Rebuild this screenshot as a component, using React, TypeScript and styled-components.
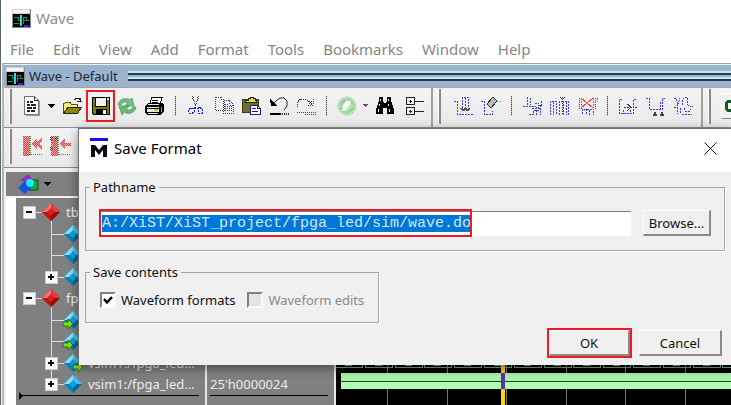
import React, { useEffect, useRef } from "react";
import styled, { createGlobalStyle, css } from "styled-components";

const uiFont = `"Noto Sans", "Open Sans", sans-serif`;

const GlobalStyle = createGlobalStyle`
  * { box-sizing: border-box; }
  html, body { margin: 0; overflow: hidden; }
  body { font-family: ${uiFont}; font-size: 13px; background: #fff; }
  button, input { font-family: inherit; font-size: inherit; }
`;

/* ---------- layout ---------- */

const AppWindow = styled.main`
  position: relative;
  display: flex;
  flex-direction: column;
  height: 100vh;
  border-left: 1px solid #566565;
  background: #fff;
  overflow: hidden;
`;

const TitleBar = styled.header`
  display: flex;
  align-items: center;
  gap: 5px;
  height: 38px;
  padding: 0 0 2px 11px;
  color: #8c8c8c;
  font-size: 15px;
`;

const MenuBar = styled.nav`
  display: flex;
  align-items: center;
  gap: 19px;
  height: 25px;
  padding: 0 0 3px 9px;
`;

const MenuItem = styled.button`
  flex: none;
  padding: 0;
  border: 0;
  background: none;
  color: #858585;
  font-size: 15px;
  line-height: 22px;
`;

const Pane = styled.section`
  flex: 1;
  min-height: 0;
  display: flex;
  flex-direction: column;
  margin-left: 1px;
  border-top: 1px solid #a0a0a0;
  border-left: 2px solid #b4b4b4;
  background: #f0f0f0;
`;

const PaneHeader = styled.div`
  display: flex;
  align-items: center;
  gap: 4px;
  height: 23px;
  margin-top: 1px;
  padding-left: 2px;
  border-bottom: 1px solid #a8a49c;
  background: #99b4d1;
  color: #22262c;
`;

const PaneTitle = styled.h1`
  margin: 0 6px 0 0;
  font-size: 13px;
  font-weight: 400;
  line-height: 18px;
`;

const Grip = styled.span`
  flex: 1;
  height: 10px;
  background: linear-gradient(#bdeaf5 0 2px, #2b3742 2px 4px, #99b4d1 4px 6px, #bdeaf5 6px 8px, #2b3742 8px);
`;

const ToolRow = styled.div`
  display: flex;
  height: 40px;
  background: linear-gradient(#f4f4f4, #e9e9e9);
  border-bottom: 1px solid #8c8c8c;
`;

const ToolGroup = styled.div<{ $grow?: boolean }>`
  display: flex;
  flex: ${(p) => (p.$grow ? "1 0 auto" : "none")};
  align-items: center;
  padding: 0 2px 3px 5px;
  border-right: 2px solid #a0a0a0;
`;

const Handle = styled.span`
  width: 3px;
  height: 35px;
  margin-right: 10px;
  border-left: 1px solid #fff;
  border-right: 2px solid #8a8a8a;
`;

const ToolButton = styled.button<{ $w: number; $marked?: boolean }>`
  flex: none;
  display: flex;
  align-items: center;
  justify-content: center;
  width: ${(p) => p.$w}px;
  height: 32px;
  padding: 0;
  border: 0;
  background: none;
  ${(p) =>
    p.$marked &&
    css`
      margin: 0 2px;
      border: 2px solid #ed1c24;
    `}
`;

const Divider = styled.span<{ $w: number }>`
  flex: none;
  width: ${(p) => p.$w}px;
  height: 20px;
  background: repeating-linear-gradient(#444 0 1px, #bbb 1px 2px) center / 1px 100% no-repeat;
`;

const RaisedTool = styled.button`
  display: flex;
  align-items: center;
  width: 28px;
  height: 26px;
  padding: 0 3px;
  border: 1px solid;
  border-color: #fff #888 #888 #fff;
  background: #f0f0f0;
`;

const WaveArea = styled.div`
  flex: 1;
  min-height: 0;
  display: flex;
  flex-direction: column;
  margin: 4px 0 0 2px;
  background: #808080;
`;

const ColumnHeader = styled.div`
  display: flex;
  align-items: center;
  height: 26px;
  padding-left: 11px;
  border-bottom: 2px solid #f4f4f4;
`;

const Columns = styled.div`
  flex: 1;
  min-height: 0;
  display: grid;
  grid-template-columns: 201px 129px 1fr;
`;

const SignalColumn = styled.ul<{ $gutter?: boolean }>`
  margin: 0;
  padding: 3px 0 0;
  list-style: none;
  color: #ececec;
  background: #808080;
  border-left: ${(p) => (p.$gutter ? "10px solid #fff" : "0")};
  border-right: 2px solid #e8e8e8;
`;

const SignalRow = styled.li`
  display: flex;
  align-items: center;
  height: 21px;
  white-space: nowrap;
  &:nth-child(odd) {
    height: 22px;
  }
`;

const SignalName = styled.span`
  padding-left: 5px;
`;

const SignalValue = styled.span`
  padding-left: 3px;
`;

const EndLine = styled.li<{ $arrow?: boolean }>`
  display: flex;
  align-items: center;
  height: 1px;
  margin: 0 6px 0 3px;
  background: #000;
  ${(p) =>
    p.$arrow &&
    css`
      &::before {
        content: "";
        flex: none;
        border: solid transparent;
        border-width: 4px 0 4px 4px;
        border-left-color: #000;
      }
    `}
`;

/* ---------- dialog ---------- */

const DialogBox = styled.section`
  position: absolute;
  top: 128px;
  left: 77px;
  right: 0;
  border: solid #6e6e6e;
  border-width: 1px 0 0 1px;
  background: #f0f0f0;
  box-shadow: 0 3px 10px rgba(0, 0, 0, 0.45);
  color: #111;
`;

const DialogTitle = styled.header`
  display: flex;
  align-items: center;
  height: 43px;
  padding: 0 14px 5px 11px;
  background: #fff;
`;

const DialogName = styled.h2`
  flex: 1;
  margin: 0;
  padding-left: 6px;
  color: #000;
  font-size: 15px;
  font-weight: 400;
  line-height: 20px;
`;

const CloseButton = styled.button`
  display: flex;
  padding: 0;
  border: 0;
  background: none;
`;

const DialogBody = styled.form`
  display: flex;
  flex-direction: column;
  align-items: flex-start;
  padding: 6px 6px 7px;
`;

const Group = styled.fieldset<{ $fill?: boolean }>`
  width: ${(p) => (p.$fill ? "100%" : "294px")};
  min-width: 0;
  margin: 0 0 12px;
  padding: 0 13px;
  border: 1px solid #a6a6a6;
  box-shadow: 1px 1px 0 #fff;
`;

const GroupName = styled.legend`
  margin-left: -9px;
  padding: 0 3px;
  line-height: 18px;
`;

const PathRow = styled.div`
  position: relative;
  display: flex;
  align-items: center;
  gap: 12px;
  padding: 14px 0 14px 1px;
`;

const PathInput = styled.input`
  flex: 1;
  min-width: 0;
  height: 25px;
  padding: 0 2px;
  border: 0;
  border-top: 1px solid #808080;
  border-radius: 0;
  outline: none;
  background: #fff;
  caret-color: transparent;
  font-family: "Liberation Mono", monospace;
  font-size: 15px;
  line-height: 22px;
  &::selection {
    background: #0078d7;
    color: #d4e6f5;
  }
`;

const PathMark = styled.span`
  position: absolute;
  top: 13px;
  left: 0;
  width: 373px;
  height: 28px;
  border: 2px solid #ed1c24;
  pointer-events: none;
`;

const PushButton = styled.button<{ $w: number }>`
  width: ${(p) => p.$w}px;
  height: 26px;
  padding: 0;
  border: solid;
  border-color: #fafafa #8a8a8a #8a8a8a #fafafa;
  border-width: 1px 2px 2px 1px;
  background: #f0f0f0;
  color: #111;
`;

const Checks = styled.div`
  display: flex;
  align-items: center;
  gap: 12px;
  padding: 10px 0 13px 1px;
`;

const CheckLabel = styled.label<{ $off?: boolean }>`
  display: flex;
  align-items: center;
  gap: 5px;
  line-height: 18px;
  white-space: nowrap;
  color: ${(p) => (p.$off ? "#8a8a8a" : "#111")};
`;

const CheckFrame = styled.span`
  display: grid;
  width: 16px;
  height: 16px;
  > * {
    grid-area: 1 / 1;
  }
  svg {
    margin: 3px;
    pointer-events: none;
  }
`;

const Check = styled.input`
  appearance: none;
  width: 16px;
  height: 16px;
  margin: 0;
  border: 2px solid;
  border-color: #808080 #fafafa #fafafa #808080;
  background: #fff;
  &:disabled {
    background: #e3e3e3;
  }
`;

const Actions = styled.div`
  display: flex;
  align-self: stretch;
  justify-content: flex-end;
  align-items: center;
  gap: 7px;
  margin-top: -7px;
  padding-right: 3px;
`;

const ActionMark = styled.span`
  display: flex;
  border: 2px solid #ed1c24;
`;

/* ---------- icons ---------- */

type IconProps = { w?: number; h?: number; children: React.ReactNode; smooth?: boolean };

const Icon = ({ w = 20, h = 20, children, smooth }: IconProps) => (
  <svg
    width={w}
    height={h}
    viewBox={`0 0 ${w} ${h}`}
    fill="none"
    shapeRendering={smooth ? "auto" : "crispEdges"}
    aria-hidden="true"
  >
    {children}
  </svg>
);

const AppIcon = () => (
  <Icon w={19} h={19}>
    <rect width="19" height="19" fill="#8a8a8a" />
    <rect width="18" height="5" fill="#d2d2d2" />
    <rect y="1" x="1" width="16" height="3" fill="#f4f4f4" />
    <rect y="5" x="1" width="17" height="13" fill="#000" />
    <path d="M2 8.500h4v3h2M2 14.500h5M11 14.500v-6h3v3h3M11 11.500h2" stroke="#11a05c" />
    <path d="M9 6v11" stroke="#38d4e4" strokeWidth="2" />
    <path d="M12 16.500h5" stroke="#3a20d8" strokeWidth="2" />
  </Icon>
);

const DocIcon = () => (
  <Icon w={18}>
    <path d="M1.500 .5h10l4 4v14h-14z" fill="#fff" stroke="#777" />
    <path d="M11.500 .5v4h4" stroke="#333" />
    <path d="M4 5.500h2M7 5.500h3M4 8.500h3M8 8.500h5M4 11.500h5M10 11.500h3M4 14.500h3M8 14.500h4" stroke="#222" strokeWidth="2" />
    <path d="M16.500 5v14.500h-14" stroke="#999" />
  </Icon>
);

const Caret = ({ small }: { small?: boolean }) => (
  <Icon w={7} h={4}>
    <path
      d={small ? "M1 0h5v1h-1v1h-1v1h-1v-1h-1v-1h-1z" : "M0 0h7v1h-1v1h-1v1h-1v1h-1v-1h-1v-1h-1v-1h-1z"}
      fill={small ? "#555" : "#000"}
    />
  </Icon>
);

const OpenIcon = () => (
  <Icon w={21}>
    <path d="M1 7h2l1-1h4l1 2h6v3H6l-5 7z" fill="#f3ef72" stroke="#55520a" />
    <path d="M1.500 17.500L6 11h13.500l-4 6.500z" fill="#8b8500" stroke="#222" />
    <path d="M12 4V3h1V2h4v1h1v2M15 5h5M18.500 2v4" stroke="#222" />
  </Icon>
);

const SaveIcon = () => (
  <Icon w={18} h={18}>
    <path d="M0 0h18v18H1l-1-1z" fill="#000" />
    <path d="M1 1h2v9h12V3h1V1h1v16h-2v-6H4v6H2l-1-1z" fill="#817b00" />
    <rect x="4" y="1" width="10" height="8" fill="#f2f2f2" />
    <path d="M2 10h14v2H2z" fill="#817b00" />
    <rect x="11" y="13" width="3" height="4" fill="#f2f2f2" />
    <rect x="15" y="1" width="2" height="2" fill="#ddd" />
  </Icon>
);

const RefreshIcon = () => (
  <Icon smooth>
    <path d="M1 9C2 3 9 1 13 4l2-2 2 8H8l3-3C8 5 5 6 4 9z" fill="#74bf7c" stroke="#489d59" strokeWidth=".8" />
    <path d="M19 11c-1 6-8 8-12 5l-2 3-3-9h10l-3 3c3 2 6 1 7-2z" fill="#6bb976" stroke="#489d59" strokeWidth=".8" />
  </Icon>
);

const PrintIcon = () => (
  <Icon w={21}>
    <path d="M5.500 8L8 1.500h10L16 8z" fill="#fff" stroke="#000" />
    <path d="M8 4.500h6M8 6.500h6" stroke="#000" />
    <path d="M1 10l4-3h13l2 2v6l-4 4H3l-2-3z" fill="#000" />
    <path d="M4 8h11v1H4zM3 11h12v1H3zM3 13h12v3H3zM4 17h10v1H4z" fill="#e8e8e8" />
    <path d="M10 13h4v2h-4z" fill="#d5c900" />
    <path d="M17 11v5" stroke="#999" />
  </Icon>
);

const dash = { strokeDasharray: "1 1" };
const wide = { strokeDasharray: "2 1" };

const CutIcon = () => (
  <Icon w={16}>
    <path d="M4.500 0v3l2 3v3M10.500 0v3l-2 3v3M5.500 1v3M9.500 1v3" stroke="#444" {...dash} />
    <path d="M7.500 8v4h-5l-2 2v3h4l2-2v-4M9.500 11h3l2 3v3h-4v-4M3 12.500h4M9 12.500h4" stroke="#2020ff" {...wide} />
  </Icon>
);

const CopyIcon = () => (
  <Icon w={21}>
    <path d="M.5 1.500h6l3 3v10h-9zM6.500 1v4" stroke="#444" {...dash} />
    <path
      d="M8.500 4.500h6l4 4v9h-10zM14.500 5v4h4M10.500 8v8M12.500 8v8M14.500 10v6M16.500 10v6"
      stroke="#2b2ba8"
      {...dash}
    />
  </Icon>
);

const PasteIcon = () => (
  <Icon w={21}>
    <path d="M1.500 3.500h16v13h-16z" fill="#716d36" stroke="#3c3a10" />
    <path d="M5 4h2V2h2V1h3v1h2v2h1v2H4V4z" fill="#e5dc30" stroke="#222" />
    <path d="M9.500 9.500h7l3 3v6h-10z" fill="#fff" stroke="#1a1a98" />
    <path d="M11 12.500h4M11 15.500h6M16.500 9v3.500h3" stroke="#1a1a98" />
  </Icon>
);

const UndoIcon = () => (
  <Icon w={21}>
    <path d="M1 3l1 7h7l-3-2z" fill="#000" />
    <path d="M5 7l3-3 3-2h4l3 3v5l-3 4" stroke="#222" shapeRendering="auto" />
    <path d="M1 17.500h11" stroke="#000" strokeWidth="2" />
    <path d="M13 17.500h7" stroke="#333" strokeWidth="2" {...dash} />
  </Icon>
);

const RedoIcon = () => (
  <Icon w={21}>
    <path d="M1.500 11V6l3-3h5l4 3 3 3M12 9.500h6M17.500 3v6M15.500 5v4M13.500 7v2" stroke="#333" {...dash} />
    <path d="M1 16.500h19M9 18.500h11" stroke="#444" {...dash} />
  </Icon>
);

const AddIcon = () => (
  <Icon smooth>
    <circle cx="10" cy="10" r="9" fill="#b9dfb4" stroke="#8ec68c" strokeDasharray="1 1" />
    <circle cx="10" cy="10" r="7" fill="#93cc8f" />
    <path d="M10 3l7 7-7 7-7-7z" fill="#b4deaf" />
    <path d="M9 5h5l-1 4-5 6H5l1-5z" fill="#f4fbf2" />
  </Icon>
);

const FindIcon = () => (
  <Icon>
    <path d="M4 1h4v4l1 2h2l1-2V1h4v4l3 8v5h-7v-6H8v6H1v-5l3-8z" fill="#000" />
    <path d="M5 3h1v2H5zM13 3h1v2h-1zM4 8h1v2H4zM3 13h1v3H3zM13 8h1v2h-1zM14 13h1v3h-1z" fill="#eee" />
  </Icon>
);

const TreeIcon = () => (
  <Icon>
    <path
      d="M1.500 1.500h8v7h-8zM1.500 11.500h8v7h-8zM4 5.500h3M5.500 4v3M4 15.500h3M5.500 14v3M10 5.500h9M10 15.500h9"
      stroke="#222"
    />
  </Icon>
);

const blue = "#3a3aff";

const InsertPulse = () => (
  <Icon>
    <path d="M0 5.500h3.500v13h15M8.500 15V1.500h6V15M11.500 2v10" stroke={blue} {...wide} />
    <path d="M6 12.500h2v2h2v-2h2v2h2v-2h2M7 13.500h9" stroke="#555" />
  </Icon>
);

const ErasePulse = () => (
  <Icon>
    <path d="M0 5.500h3.500v13h8v-4" stroke={blue} {...wide} />
    <path d="M6 8l6-7 4 4-6 7z" fill="#bbb" stroke="#333" />
    <path d="M16 5.500h4" stroke="#25dce8" {...wide} />
  </Icon>
);

const CutWave = () => (
  <Icon>
    <path d="M1 10.500h13M5.500 1v9M8.500 2v7M14.500 11v8M18.500 9v10M10 12.500h8" stroke={blue} {...wide} />
    <path d="M19.500 5v4h-3v5h-5v4h-5M13 7.500h4" stroke="#444" {...wide} />
  </Icon>
);

const CopyWave = () => (
  <Icon>
    <path d="M.5 19V5.500h6V19M3.500 6v13M9.500 19V5.500h2M13.500 19V5.500h5V19M16.500 6v13" stroke={blue} {...wide} />
    <path d="M12.500 1v18M10 1.500h5M11 2.500h3" stroke="#333" {...dash} />
  </Icon>
);

const DeleteWave = () => (
  <Icon>
    <path d="M4.500 18v-5h4v6M11.500 19v-6h4v6M9 13.500h4" stroke={blue} {...wide} />
    <path d="M1.500 2v12M17.500 2v12" stroke="#444" {...dash} />
    <path d="M3 2l12 10M15 2L3 12" stroke="#ff4242" />
    <path d="M3.500 2v12M15.500 2v10M19.500 2v4" stroke="#ff4242" {...wide} />
  </Icon>
);

const StretchWave = () => (
  <Icon>
    <path d="M4 3.500h-2.500v14h14v-14H19M5.500 14v4M12.500 14v4" stroke={blue} {...wide} />
    <path d="M6 11.500h8M17 11.500h2" stroke="#333" {...wide} />
    <path d="M9 8l4 3-4 4" stroke="#444" />
  </Icon>
);

const MoveWave = () => (
  <Icon>
    <path d="M0 2.500h3.500v11h13v-11H20M14.500 6v7" stroke={blue} {...wide} />
    <path d="M7 18.500h4M14 18.500h4M8 16.500h2M15 16.500h2" stroke="#444" strokeWidth="2" />
  </Icon>
);

const InvertWave = () => (
  <Icon>
    <path
      d="M1 2.500h2l2 5 2-5M4.500 8v10M1 11.500h3M7.500 12v5M9.500 9V3.500l2-2h3v7l3 2M9 18.500h10M11.500 12v3h6"
      stroke={blue}
      {...wide}
    />
    <path d="M17 10.500h3M17 13.500h2" stroke="#333" {...dash} />
  </Icon>
);

const ContainsIcon = () => (
  <Icon w={12} h={12}>
    <path d="M11 1.500H3l-1.500 2v5L3 10.500h8" stroke="#0f5a20" strokeWidth="3" />
  </Icon>
);

const GotoIcon = ({ single }: { single?: boolean }) => (
  <Icon w={22} h={22}>
    <defs>
      <pattern id="weave" width="2" height="2" patternUnits="userSpaceOnUse">
        <rect width="2" height="2" fill="#f8a8a8" />
        <rect width="1" height="1" fill="#d84040" />
        <rect x="1" y="1" width="1" height="1" fill="#d84040" />
      </pattern>
      <pattern id="weaveDark" width="2" height="2" patternUnits="userSpaceOnUse">
        <rect width="1" height="1" fill="#333" />
        <rect x="1" y="1" width="1" height="1" fill="#333" />
      </pattern>
    </defs>
    <rect x="1" y="1" width="7" height="20" fill="url(#weave)" />
    {single && <path d="M0 2h3v4H0zM5 2h3v4H5zM0 12h3v3H0z" fill="url(#weaveDark)" />}
    <path d="M9 1.500h-1v18h13" stroke="#2f9a4a" {...dash} />
    {single ? (
      <path d="M9 9l6-5v4h6v3h-6v4z" fill="url(#weave)" />
    ) : (
      <path d="M9 9l6-6v4l5-4v3l-2 3 2 3v3l-5-4v4z" fill="url(#weave)" />
    )}
  </Icon>
);

const ShapesIcon = () => (
  <Icon w={21} smooth>
    <path d="M3 6l7-5 5 6-5 4-3-4z" fill="#b320d8" stroke="#6c108c" strokeWidth=".6" />
    <path d="M13 6h7v10h-9z" fill="#18a53c" stroke="#064d16" />
    <path d="M7 7l6 7-6 6-7-6z" fill="#1652e0" />
    <circle cx="12" cy="9" r="4" fill="#18eaff" />
  </Icon>
);

const Diamond = ({ x, red }: { x: number; red?: boolean }) => (
  <g transform={`translate(${x} 2)`} shapeRendering="auto">
    <path d="M9 0l9 9-9 9-9-9z" fill={red ? "#d81f1f" : "#0aa2dd"} />
    <path d="M9 0v5L5 9H0z" fill={red ? "#f27070" : "#8fdcf6"} />
    <path d="M9 0l9 9h-5L9 5z" fill={red ? "#e33c3c" : "#45c3ee"} />
    <path d="M18 9l-9 9v-5l4-4z" fill={red ? "#8f0d0d" : "#05659c"} />
    <path d="M0 9l9 9v-5L5 9z" fill={red ? "#b81414" : "#0784c0"} />
  </g>
);

const Toggle = ({ x, open }: { x: number; open?: boolean }) => (
  <g>
    <rect x={x} y="5" width="12" height="12" fill="#f8f8fc" stroke="#c4cbdc" />
    <path d={`M${x + 3} 11h6`} stroke="#111" strokeWidth="2" />
    {!open && <path d={`M${x + 6} 8v6`} stroke="#111" strokeWidth="2" />}
  </g>
);

type NodeKind = "root" | "leaf" | "bus";
type Signal = { kind: NodeKind; name?: string; value?: string; arrow?: "in" | "out"; last?: boolean };

const TreeCell = ({ kind, arrow, last }: Signal) =>
  kind === "root" ? (
    <Icon w={45} h={22}>
      <path d="M18 11.500h8M35.500 18v4" stroke="#ddd" />
      <Toggle x={7} open />
      <Diamond x={26} red />
    </Icon>
  ) : (
    <Icon w={67} h={22}>
      <path d={`M35.500 0V${last ? 11 : 22}M36 11.500h13`} stroke="#ddd" />
      {kind === "bus" && <Toggle x={29} />}
      <Diamond x={48} />
      {arrow && (
        <path
          transform={`translate(${arrow === "in" ? 47 : 57} 10)`}
          d="M0 3h5V0l5 5-5 5V7H0z"
          fill="#7be01c"
          stroke="#235a08"
          strokeWidth=".8"
          shapeRendering="auto"
        />
      )}
    </Icon>
  );

const DialogIcon = () => (
  <Icon w={18} smooth>
    <path d="M0 1.500h18" stroke="#1212f0" strokeWidth="3" />
    <path d="M1 19V7h4l4 5 4-5h4v12h-4v-7l-4 5-4-5v7z" fill="#0a0a14" />
  </Icon>
);

const CloseIcon = () => (
  <Icon w={13} h={13} smooth>
    <path d="M.5 .5l12 12M12.500 .5l-12 12" stroke="#111" />
  </Icon>
);

const Tick = () => (
  <Icon w={10} h={10} smooth>
    <path d="M1 4l3 3.500L9 2" stroke="#000" strokeWidth="2.400" />
  </Icon>
);

/* ---------- wave view ---------- */

const WaveSvg = styled.svg`
  display: block;
  width: 100%;
  height: 100%;
  background: #000;
`;

const cells = Array.from({ length: 40 }, (_, i) => -1 + Math.round(i * 29.8));
const gridLines = Array.from({ length: 20 }, (_, i) => 51 + Math.round(i * 59.5));

const WaveView = () => (
  <WaveSvg shapeRendering="crispEdges" role="img" aria-label="Waveforms">
    {gridLines.map((x) => (
      <path key={x} d={`M${x}.5 0V600`} stroke="#777" />
    ))}
    {cells.map((x) => (
      <g key={x}>
        <rect x={x} y="155" width="27" height="14" fill="none" stroke="#6fa872" />
        <path d={`M${x + 10} 167.500h7`} stroke="#999" />
      </g>
    ))}
    <rect x="5" y="175" width="100%" height="8" fill="#a9f3a9" />
    <rect x="5" y="183" width="100%" height="1" fill="#1d4a1d" />
    <rect x="5" y="184" width="100%" height="7" fill="#b0ffb0" />
    <rect x="165" width="4" height="100%" fill="#ffd400" />
    <rect x="165" y="175" width="4" height="16" fill="#5a2fae" />
  </WaveSvg>
);

/* ---------- content ---------- */

const menus = ["File", "Edit", "View", "Add", "Format", "Tools", "Bookmarks", "Window", "Help"];

const signals: Signal[] = [
  { kind: "root", name: "tb" },
  { kind: "leaf" },
  { kind: "leaf" },
  { kind: "bus", last: true },
  { kind: "root", name: "fpga" },
  { kind: "leaf", arrow: "in" },
  { kind: "leaf", arrow: "in" },
  { kind: "bus", name: "vsim1:/fpga_led...", arrow: "out" },
  { kind: "bus", name: "vsim1:/fpga_led...", value: "25'h0000024", last: true },
];

const tool = (label: string, w: number, icon: React.ReactNode, marked?: boolean) => (
  <ToolButton type="button" aria-label={label} $w={w} $marked={marked}>
    {icon}
  </ToolButton>
);

const SaveDialog = () => {
  const path = useRef<HTMLInputElement>(null);
  useEffect(() => {
    path.current?.focus();
    path.current?.select();
  }, []);
  return (
    <DialogBox role="dialog" aria-labelledby="dialog-name">
      <DialogTitle>
        <DialogIcon />
        <DialogName id="dialog-name">Save Format</DialogName>
        <CloseButton type="button" aria-label="Close">
          <CloseIcon />
        </CloseButton>
      </DialogTitle>
      <DialogBody onSubmit={(e) => e.preventDefault()}>
        <Group $fill>
          <GroupName>Pathname</GroupName>
          <PathRow>
            <PathInput
              ref={path}
              aria-label="Pathname"
              spellCheck={false}
              defaultValue="A:/XiST/XiST_project/fpga_led/sim/wave.do"
            />
            <PathMark />
            <PushButton type="button" $w={68}>
              Browse...
            </PushButton>
          </PathRow>
        </Group>
        <Group>
          <GroupName>Save contents</GroupName>
          <Checks>
            <CheckLabel>
              <CheckFrame>
                <Check type="checkbox" defaultChecked />
                <Tick />
              </CheckFrame>
              Waveform formats
            </CheckLabel>
            <CheckLabel $off>
              <CheckFrame>
                <Check type="checkbox" disabled />
              </CheckFrame>
              Waveform edits
            </CheckLabel>
          </Checks>
        </Group>
        <Actions>
          <ActionMark>
            <PushButton type="submit" $w={81}>
              OK
            </PushButton>
          </ActionMark>
          <PushButton type="button" $w={83}>
            Cancel
          </PushButton>
        </Actions>
      </DialogBody>
    </DialogBox>
  );
};

export default function App() {
  return (
    <>
      <GlobalStyle />
      <AppWindow>
        <TitleBar>
          <AppIcon />
          Wave
        </TitleBar>
        <MenuBar>
          {menus.map((m) => (
            <MenuItem type="button" key={m}>
              {m}
            </MenuItem>
          ))}
        </MenuBar>
        <Pane>
          <PaneHeader>
            <AppIcon />
            <PaneTitle>Wave - Default</PaneTitle>
            <Grip />
          </PaneHeader>
          <ToolRow>
            <ToolGroup>
              <Handle />
              {tool("New", 20, <DocIcon />)}
              {tool("New options", 18, <Caret />)}
              {tool("Open", 24, <OpenIcon />)}
              {tool("Save", 29, <SaveIcon />, true)}
              {tool("Reload", 20, <RefreshIcon />)}
              {tool("Print", 34, <PrintIcon />)}
              <Divider $w={8} />
              {tool("Cut", 34, <CutIcon />)}
              {tool("Copy", 24, <CopyIcon />)}
              {tool("Paste", 28, <PasteIcon />)}
              {tool("Undo", 28, <UndoIcon />)}
              {tool("Redo", 26, <RedoIcon />)}
              <Divider $w={14} />
              {tool("Add", 28, <AddIcon />)}
              {tool("Add options", 8, <Caret small />)}
              {tool("Find", 32, <FindIcon />)}
              {tool("Collapse", 28, <TreeIcon />)}
            </ToolGroup>
            <ToolGroup>
              <Handle />
              {tool("Insert pulse", 26, <InsertPulse />)}
              {tool("Delete edge", 28, <ErasePulse />)}
              <Divider $w={12} />
              {tool("Cut wave", 30, <CutWave />)}
              {tool("Copy wave", 26, <CopyWave />)}
              {tool("Delete wave", 30, <DeleteWave />)}
              <Divider $w={8} />
              {tool("Stretch", 34, <StretchWave />)}
              {tool("Move edge", 22, <MoveWave />)}
              {tool("Invert", 32, <InvertWave />)}
            </ToolGroup>
            <ToolGroup $grow>
              <Handle />
              <RaisedTool type="button" aria-label="Contains">
                <ContainsIcon />
              </RaisedTool>
            </ToolGroup>
          </ToolRow>
          <ToolRow>
            <ToolGroup $grow>
              <Handle />
              {tool("First edge", 22, <GotoIcon />)}
              {tool("Previous edge", 34, <GotoIcon single />)}
            </ToolGroup>
          </ToolRow>
          <WaveArea>
            <ColumnHeader>
              {tool("Objects", 22, <ShapesIcon />)}
              {tool("Objects options", 16, <Caret />)}
            </ColumnHeader>
            <Columns>
              <SignalColumn $gutter>
                {signals.map((s, i) => (
                  <SignalRow key={i}>
                    <TreeCell {...s} />
                    {s.name && <SignalName>{s.name}</SignalName>}
                  </SignalRow>
                ))}
                <EndLine $arrow />
              </SignalColumn>
              <SignalColumn>
                {signals.map((s, i) => (
                  <SignalRow key={i}>{s.value && <SignalValue>{s.value}</SignalValue>}</SignalRow>
                ))}
                <EndLine />
              </SignalColumn>
              <WaveView />
            </Columns>
          </WaveArea>
        </Pane>
        <SaveDialog />
      </AppWindow>
    </>
  );
}
